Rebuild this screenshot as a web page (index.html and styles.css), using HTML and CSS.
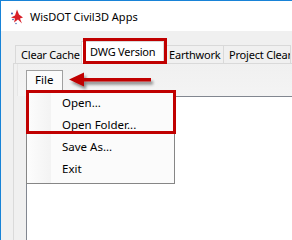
FILE: index.html
```html
<!DOCTYPE html>
<html lang="en">
<head>
  <meta charset="UTF-8">
  <title>WisDOT Civil3D Apps</title>
  <link rel="stylesheet" href="styles.css">
</head>
<body>
  <div class="window">
    <div class="titlebar">
      <svg class="app-icon" viewBox="0 0 14 16">
        <path d="M7 1 L9 6 L13 9 L10 10 L12 15 L8 11 L4 14 L5 10 L1 9 L5 7 Z" fill="#d8202a"></path>
        <circle cx="2" cy="5" r="1" fill="#3a5bb0"></circle>
        <circle cx="3" cy="11" r="0.8" fill="#3a5bb0"></circle>
        <circle cx="6" cy="15" r="0.7" fill="#3a5bb0"></circle>
      </svg>
      <span class="title">WisDOT Civil3D Apps</span>
    </div>

    <div class="client">
      <div class="tabstrip">
        <div class="tab">Clear Cache</div>
        <div class="tab selected">DWG Version</div>
        <div class="tab">Earthwork</div>
        <div class="tab">Project Clear</div>
      </div>
      <div class="tabpage">
        <div class="menustrip">
          <div class="menu-item open">
            File
            <div class="dropdown">
              <div class="drop-item">Open...</div>
              <div class="drop-item">Open Folder...</div>
              <div class="drop-item">Save As...</div>
              <div class="drop-item">Exit</div>
            </div>
          </div>
        </div>
        <div class="panel"></div>
      </div>
    </div>

    <!-- annotations -->
    <div class="callout callout-tab"></div>
    <div class="callout callout-items"></div>
    <svg class="arrow" viewBox="0 0 90 24">
      <defs>
        <filter id="shade" x="-10%" y="-50%" width="130%" height="200%">
          <feGaussianBlur in="SourceAlpha" stdDeviation="1.5"></feGaussianBlur>
          <feOffset dx="2" dy="3" result="b"></feOffset>
          <feComponentTransfer><feFuncA type="linear" slope="0.45"></feFuncA></feComponentTransfer>
          <feMerge><feMergeNode></feMergeNode><feMergeNode in="SourceGraphic"></feMergeNode></feMerge>
        </filter>
      </defs>
      <path d="M2 10.5 L17 3.5 L17 9 L84 9 L84 12.5 L17 12.5 L17 17.5 Z" fill="#c00000" filter="url(#shade)"></path>
    </svg>
  </div>
</body>
</html>
```

FILE: styles.css
```css
body {
  margin: 0;
  background: #f0f0f0;
  font-family: "Noto Sans", "Open Sans", sans-serif;
  font-size: 11.5px;
  color: #000;
}

.window {
  position: relative;
  width: 292px;
  height: 240px;
  box-sizing: border-box;
  border-top: 1px solid #1883d7;
  border-left: 1px solid #1883d7;
  background: #f0f0f0;
  overflow: hidden;
  display: flex;
  flex-direction: column;
}

.titlebar {
  height: 30px;
  flex: none;
  background: #fff;
  display: flex;
  align-items: center;
  padding-left: 9px;
  gap: 6px;
}

.app-icon {
  width: 14px;
  height: 17px;
}

.title {
  font-size: 11px;
  margin-top: 1px;
}

.client {
  flex: 1;
  display: flex;
  flex-direction: column;
  padding: 10px 0 0 12px;
}

.tabstrip {
  display: flex;
  align-items: flex-end;
  height: 22px;
  padding-left: 2px;
  white-space: nowrap;
  font-size: 11px;
  letter-spacing: -0.2px;
}

.tab {
  height: 18px;
  line-height: 17px;
  box-sizing: border-box;
  border: 1px solid #d9d9d9;
  border-bottom: none;
  background: #f0f0f0;
  padding: 0 5px;
  margin-right: -1px;
  overflow: hidden;
}

.tab:nth-child(1) { width: 68px; }
.tab:nth-child(3) { width: 61px; }
.tab:nth-child(4) { width: 68px; padding-right: 0; }

.tab.selected {
  position: relative;
  z-index: 1;
  width: 83px;
  height: 22px;
  line-height: 19px;
  background: #fff;
  padding-left: 8px;
  margin: 0 -1px 0 -1px;
}

.tabpage {
  flex: 1;
  display: flex;
  flex-direction: column;
  border-top: 1px solid #d9d9d9;
  border-left: 1px solid #dadada;
  background: #f0f0f0;
}

.menustrip {
  height: 32px;
  flex: none;
  box-sizing: border-box;
  padding: 6px 0 0 12px;
  margin-left: 3px;
  border-left: 1px solid #e6e6e6;
  background: linear-gradient(#f0f0f0, #f4f4f4);
}

.menu-item {
  position: relative;
  width: 37px;
  height: 20px;
  box-sizing: border-box;
  padding-left: 8px;
  line-height: 18px;
}

.menu-item.open {
  border: 1px solid #a0a0a0;
  border-bottom: none;
  background: #fbfbfb;
  margin-left: -4px;
}

.dropdown {
  position: absolute;
  left: -1px;
  top: 19px;
  z-index: 2;
  width: 149px;
  box-sizing: border-box;
  border: 1px solid #868686;
  padding: 2px 0;
  background: linear-gradient(90deg, #fdfdfd 0, #f3f3f3 24px, #fbfbfb 24px);
}

.drop-item {
  height: 22px;
  line-height: 20px;
  padding-left: 35px;
  white-space: nowrap;
}

.panel {
  flex: 1;
  margin-left: 12px;
  border-top: 1px solid #828790;
  border-left: 1px solid #828790;
  background: #fff;
}

.callout {
  position: absolute;
  box-sizing: border-box;
  border: 3px solid #c00000;
  z-index: 5;
}

.callout-tab {
  left: 82px;
  top: 37px;
  width: 84px;
  height: 26px;
}

.callout-items {
  left: 25px;
  top: 89px;
  width: 150px;
  height: 44px;
}

.arrow {
  position: absolute;
  left: 66px;
  top: 68px;
  width: 90px;
  height: 24px;
  z-index: 5;
}
```
